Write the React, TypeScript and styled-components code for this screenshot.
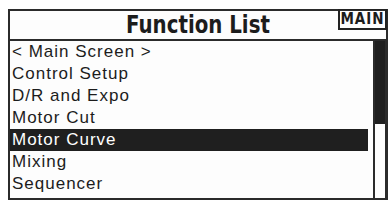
import React from "react";
import styled, { createGlobalStyle } from "styled-components";

const GlobalStyle = createGlobalStyle`
  html, body {
    margin: 0;
    padding: 0;
    background: #ffffff;
  }
  body {
    font-family: "Liberation Sans", Arial, sans-serif;
  }
`;

// outer LCD frame
const Screen = styled.div`
  box-sizing: border-box;
  margin: 9px 0 0 8px;
  width: 380px;
  height: 191px;
  border: 2px solid #2b2b2b;
  background: #fdfdfd;
  display: flex;
  flex-direction: column;
`;

const Header = styled.div`
  box-sizing: border-box;
  height: 30px;
  border-bottom: 2px solid #2b2b2b;
  display: grid;
  grid-template-columns: 1fr auto 1fr;
  align-items: start;
`;

const Title = styled.div`
  grid-column: 2;
  font-family: "DejaVu Sans Condensed", "DejaVu Sans", sans-serif;
  font-weight: bold;
  font-size: 22px;
  line-height: 28px;
  color: #1c1c1c;
  transform: scaleY(1.1);
`;

// "MAIN" tag in the top right corner
const Badge = styled.div`
  grid-column: 3;
  justify-self: end;
  margin-right: -1px;
  margin-top: -2px;
  box-sizing: border-box;
  width: 49px;
  height: 21px;
  border: 2px solid #222;
  border-top-width: 1px;
  font-family: "DejaVu Sans Condensed", "DejaVu Sans", sans-serif;
  font-weight: bold;
  font-size: 15px;
  line-height: 18px;
  text-align: center;
  color: #1c1c1c;
  letter-spacing: 1px;
  -webkit-font-smoothing: antialiased;
`;

const Body = styled.div`
  flex: 1;
  display: flex;
  min-height: 0;
`;

const List = styled.div`
  flex: 1;
  display: flex;
  flex-direction: column;
  padding-right: 5px;
`;

const Row = styled.div<{ $selected?: boolean }>`
  height: 22px;
  line-height: 22px;
  padding-left: 2px;
  font-family: "Liberation Sans", Arial, sans-serif;
  font-size: 17px;
  letter-spacing: 1px;
  color: ${(p) => (p.$selected ? "#fff" : "#1c1c1c")};
  background: ${(p) => (p.$selected ? "#1f1f1f" : "transparent")};
  white-space: nowrap;
`;

const Track = styled.div`
  box-sizing: border-box;
  width: 13px;
  border-left: 2px solid #2b2b2b;
  border-right: 1px solid #2b2b2b;
  display: flex;
  flex-direction: column;
`;

const Thumb = styled.div`
  height: 83px;
  background: #1f1f1f;
`;

const items = [
  "< Main Screen >",
  "Control Setup",
  "D/R and Expo",
  "Motor Cut",
  "Motor Curve",
  "Mixing",
  "Sequencer",
];

export default function App() {
  return (
    <>
      <GlobalStyle />
      <Screen>
        <Header>
          <Title>Function List</Title>
          <Badge>MAIN</Badge>
        </Header>
        <Body>
          <List>
            {items.map((it) => (
              <Row key={it} $selected={it === "Motor Curve"}>
                {it}
              </Row>
            ))}
          </List>
          <Track>
            <Thumb />
          </Track>
        </Body>
      </Screen>
    </>
  );
}
